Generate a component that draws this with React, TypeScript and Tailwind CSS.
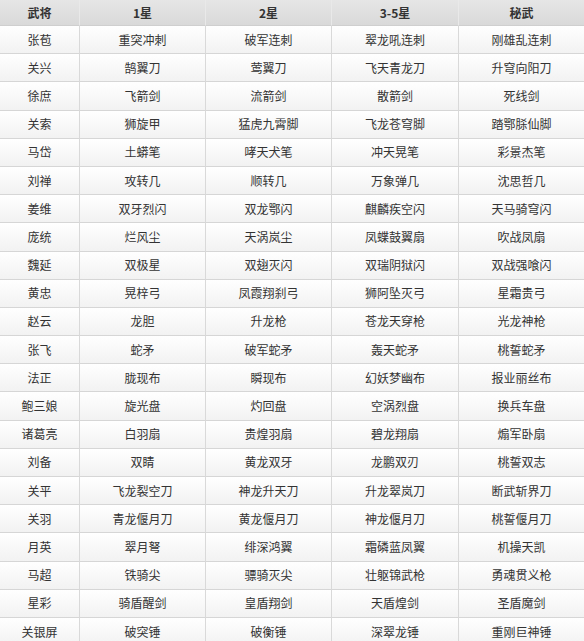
import React from "react";

const header = ["武将", "1星", "2星", "3-5星", "秘武"];

const rows: string[][] = [
  ["张苞", "重突冲刺", "破军连刺", "翠龙吼连刺", "刚雄乱连刺"],
  ["关兴", "鹄翼刀", "莺翼刀", "飞天青龙刀", "升穹向阳刀"],
  ["徐庶", "飞箭剑", "流箭剑", "散箭剑", "死线剑"],
  ["关索", "狮旋甲", "猛虎九霄脚", "飞龙苍穹脚", "踏鄂脎仙脚"],
  ["马岱", "土蟒笔", "哮天犬笔", "冲天晃笔", "彩景杰笔"],
  ["刘禅", "攻转几", "顺转几", "万象弹几", "沈思哲几"],
  ["姜维", "双牙烈闪", "双龙鄂闪", "麒麟疾空闪", "天马骑穹闪"],
  ["庞统", "烂风尘", "天涡岚尘", "凤蝶鼓翼扇", "吹战凤扇"],
  ["魏延", "双极星", "双翅灭闪", "双瑞阴狱闪", "双战强喰闪"],
  ["黄忠", "晃梓弓", "凤霞翔刹弓", "狮阿坠灭弓", "星霜贵弓"],
  ["赵云", "龙胆", "升龙枪", "苍龙天穿枪", "光龙神枪"],
  ["张飞", "蛇矛", "破军蛇矛", "轰天蛇矛", "桃誓蛇矛"],
  ["法正", "胧现布", "瞬现布", "幻妖梦幽布", "报业丽丝布"],
  ["鲍三娘", "旋光盘", "灼回盘", "空涡烈盘", "换兵车盘"],
  ["诸葛亮", "白羽扇", "贵煌羽扇", "碧龙翔扇", "煽军卧扇"],
  ["刘备", "双睛", "黄龙双牙", "龙鹏双刃", "桃誓双志"],
  ["关平", "飞龙裂空刀", "神龙升天刀", "升龙翠岚刀", "断武斩界刀"],
  ["关羽", "青龙偃月刀", "黄龙偃月刀", "神龙偃月刀", "桃誓偃月刀"],
  ["月英", "翠月弩", "绯深鸿翼", "霜磷蓝凤翼", "机操天凯"],
  ["马超", "铁骑尖", "骠骑灭尖", "壮躯锦武枪", "勇魂贯义枪"],
  ["星彩", "骑盾醒剑", "皇盾翔剑", "天盾煌剑", "圣盾魔剑"],
  ["关银屏", "破突锤", "破衡锤", "深翠龙锤", "重刚巨神锤"],
];

const font = {
  fontFamily: '"Noto Sans CJK SC", "Noto Sans", sans-serif',
};

export default function App() {
  return (
    <div
      className="w-[584px] h-[641px] overflow-hidden bg-white text-[12px] text-[#333]"
      style={font}
    >
      <div className="grid grid-cols-[80px_126px_126px_127px_125px]">
        {header.map((h, i) => (
          <div
            key={h}
            className={`h-[26px] flex items-center justify-center font-bold text-[#333] bg-gradient-to-b from-[#e6e6e6] to-[#d9d9d9] border-b border-[#cfcfcf] ${
              i < 4 ? "border-r border-r-[#e9e9e9]" : ""
            }`}
          >
            {h}
          </div>
        ))}
        {rows.map((r, ri) =>
          r.map((c, ci) => (
            <div
              key={`${ri}-${ci}`}
              className={`h-[28.2px] flex items-center justify-center bg-gradient-to-b from-[#ffffff] to-[#f2f2f2] border-b border-[#d6d6d6] ${
                ci < 4 ? "border-r border-r-[#d9d9d9]" : ""
              }`}
            >
              {c}
            </div>
          ))
        )}
      </div>
    </div>
  );
}
